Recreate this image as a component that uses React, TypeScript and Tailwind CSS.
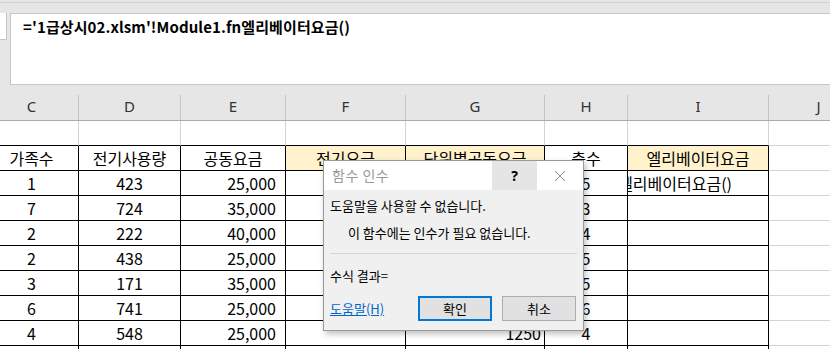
import React from "react";

const cols = [
  { letter: "C", w: 94 },
  { letter: "D", w: 102 },
  { letter: "E", w: 105 },
  { letter: "F", w: 120 },
  { letter: "G", w: 139 },
  { letter: "H", w: 83 },
  { letter: "I", w: 141 },
  { letter: "J", w: 100 },
];

const heads = ["가족수", "전기사용량", "공동요금", "전기요금", "단위별공동요금", "층수", "엘리베이터요금"];
const yellow = [false, false, false, true, true, false, true];

const data = [
  ["1", "423", "25,000", "", "", "5"],
  ["7", "724", "35,000", "", "", "3"],
  ["2", "222", "40,000", "", "", "4"],
  ["2", "438", "25,000", "", "", "5"],
  ["3", "171", "35,000", "", "", "5"],
  ["6", "741", "25,000", "", "", "6"],
  ["4", "548", "25,000", "", "1250", "4"],
  ["", "", "", "", "", ""],
];

const formula = "='1급상시02.xlsm'!Module1.fn엘리베이터요금()";

function cellAlign(ci: number) {
  if (ci === 2) return "justify-end pr-[9px]";
  if (ci === 4) return "justify-end pr-[3px]";
  return "justify-center";
}

export default function App() {
  return (
    <div className="relative w-[830px] h-[349px] overflow-hidden bg-white font-['Noto_Sans_CJK_KR',sans-serif] text-black">
      {/* 상단 */}
      <div className="h-[13px] bg-[#e6e6e6] pt-[2px]">
        <div className="h-px bg-[#d2d2d2]" />
      </div>

      {/* 수식 입력줄 */}
      <div className="flex h-[72px] bg-[#e6e6e6]">
        <div className="w-[7px] h-[27px] bg-white border-r border-b border-[#c6c6c6]" />
        <div className="w-[3px]" />
        <div className="flex-1 bg-white border-l border-t border-b border-[#c6c6c6] pl-[12px] pt-[3px]">
          <p className="text-[15px] font-bold leading-[20px] tracking-[0.1px]">{formula}</p>
        </div>
      </div>

      <div className="-ml-[15px]">
        {/* 열 머리글 */}
        <div className="flex h-[36px] bg-[#e6e6e6] border-b border-[#ababab]">
          {cols.map((c) => (
            <div key={c.letter} className="flex shrink-0" style={{ width: c.w }}>
              <div className="flex-1 flex items-center justify-center pt-[8px] text-[15px] text-[#333] font-['Noto_Sans',sans-serif]">
                {c.letter}
              </div>
              <div className="w-px h-[25px] self-end bg-[#c4c4c4]" />
            </div>
          ))}
        </div>

        {/* 1행 (빈 행) */}
        <div className="flex h-[25px]">
          {cols.map((c, i) => (
            <div
              key={c.letter}
              className={`shrink-0 border-r border-r-[#d4d4d4] border-b ${i < 7 ? "border-b-black" : "border-b-[#d4d4d4]"}`}
              style={{ width: c.w }}
            />
          ))}
        </div>

        {/* 표 머리글 */}
        <div className="flex h-[25px]">
          {cols.map((c, i) => (
            <div
              key={c.letter}
              className={`shrink-0 flex items-center justify-center text-[16px] border-b ${
                i < 7 ? "border-r border-r-black border-b-black" : "border-r border-r-[#d4d4d4] border-b-[#d4d4d4]"
              } ${yellow[i] ? "bg-[#fff2cc]" : ""}`}
              style={{ width: c.w }}
            >
              {i < 7 ? heads[i] : ""}
            </div>
          ))}
        </div>

        {/* 자료 */}
        {data.map((row, r) => (
          <div key={r} className="flex h-[25px]">
            {cols.map((c, i) => (
              <div
                key={c.letter}
                className={`shrink-0 flex items-center overflow-hidden whitespace-nowrap text-[16px] border-b ${
                  i < 7 ? "border-r border-r-black border-b-black" : "border-r border-r-[#d4d4d4] border-b-[#d4d4d4]"
                } ${i < 6 ? cellAlign(i) : "justify-end pr-[36px]"}`}
                style={{ width: c.w }}
              >
                {i < 6 ? row[i] : i === 6 && r === 0 ? formula : ""}
              </div>
            ))}
          </div>
        ))}
      </div>

      {/* 함수 인수 대화 상자 */}
      <div className="absolute left-[323px] top-[160px] w-[261px] h-[171px] bg-[#f0f0f0] border border-[#9a9a9a] shadow-[2px_3px_6px_rgba(0,0,0,0.25)] flex flex-col text-[13px]">
        <div className="h-[29px] bg-white flex items-stretch">
          <div className="flex-1 flex items-center pl-[8px] text-[14px] tracking-[0.5px] text-[#999]">함수 인수</div>
          <div className="w-[45px] bg-[#e5e5e5] flex items-center justify-center text-[14px] font-bold font-['Noto_Sans',sans-serif]">
            ?
          </div>
          <div className="w-[46px] flex items-center justify-center">
            <svg width="12" height="12" viewBox="0 0 12 12">
              <path d="M1 1 L11 11 M11 1 L1 11" stroke="#8a8a8a" strokeWidth="1" fill="none" />
            </svg>
          </div>
        </div>
        <div className="flex-1 flex flex-col px-[6px]">
          <p className="mt-[7px] leading-[18px]">도움말을 사용할 수 없습니다.</p>
          <p className="pl-[18px] mt-[9px] leading-[18px]">이 함수에는 인수가 필요 없습니다.</p>
          <div className="mt-[11px] h-px bg-[#d5d5d5]" />
          <p className="mt-[13px] leading-[18px]">수식 결과=</p>
          <div className="mt-[11px] flex items-center gap-[10px]">
            <a className="flex-1 text-[#0066cc] underline">도움말(H)</a>
            <button className="w-[74px] h-[25px] bg-[#e1e1e1] border-2 border-[#0078d7]">확인</button>
            <button className="w-[74px] h-[25px] bg-[#e1e1e1] border border-[#adadad] mr-px">취소</button>
          </div>
        </div>
      </div>
    </div>
  );
}
